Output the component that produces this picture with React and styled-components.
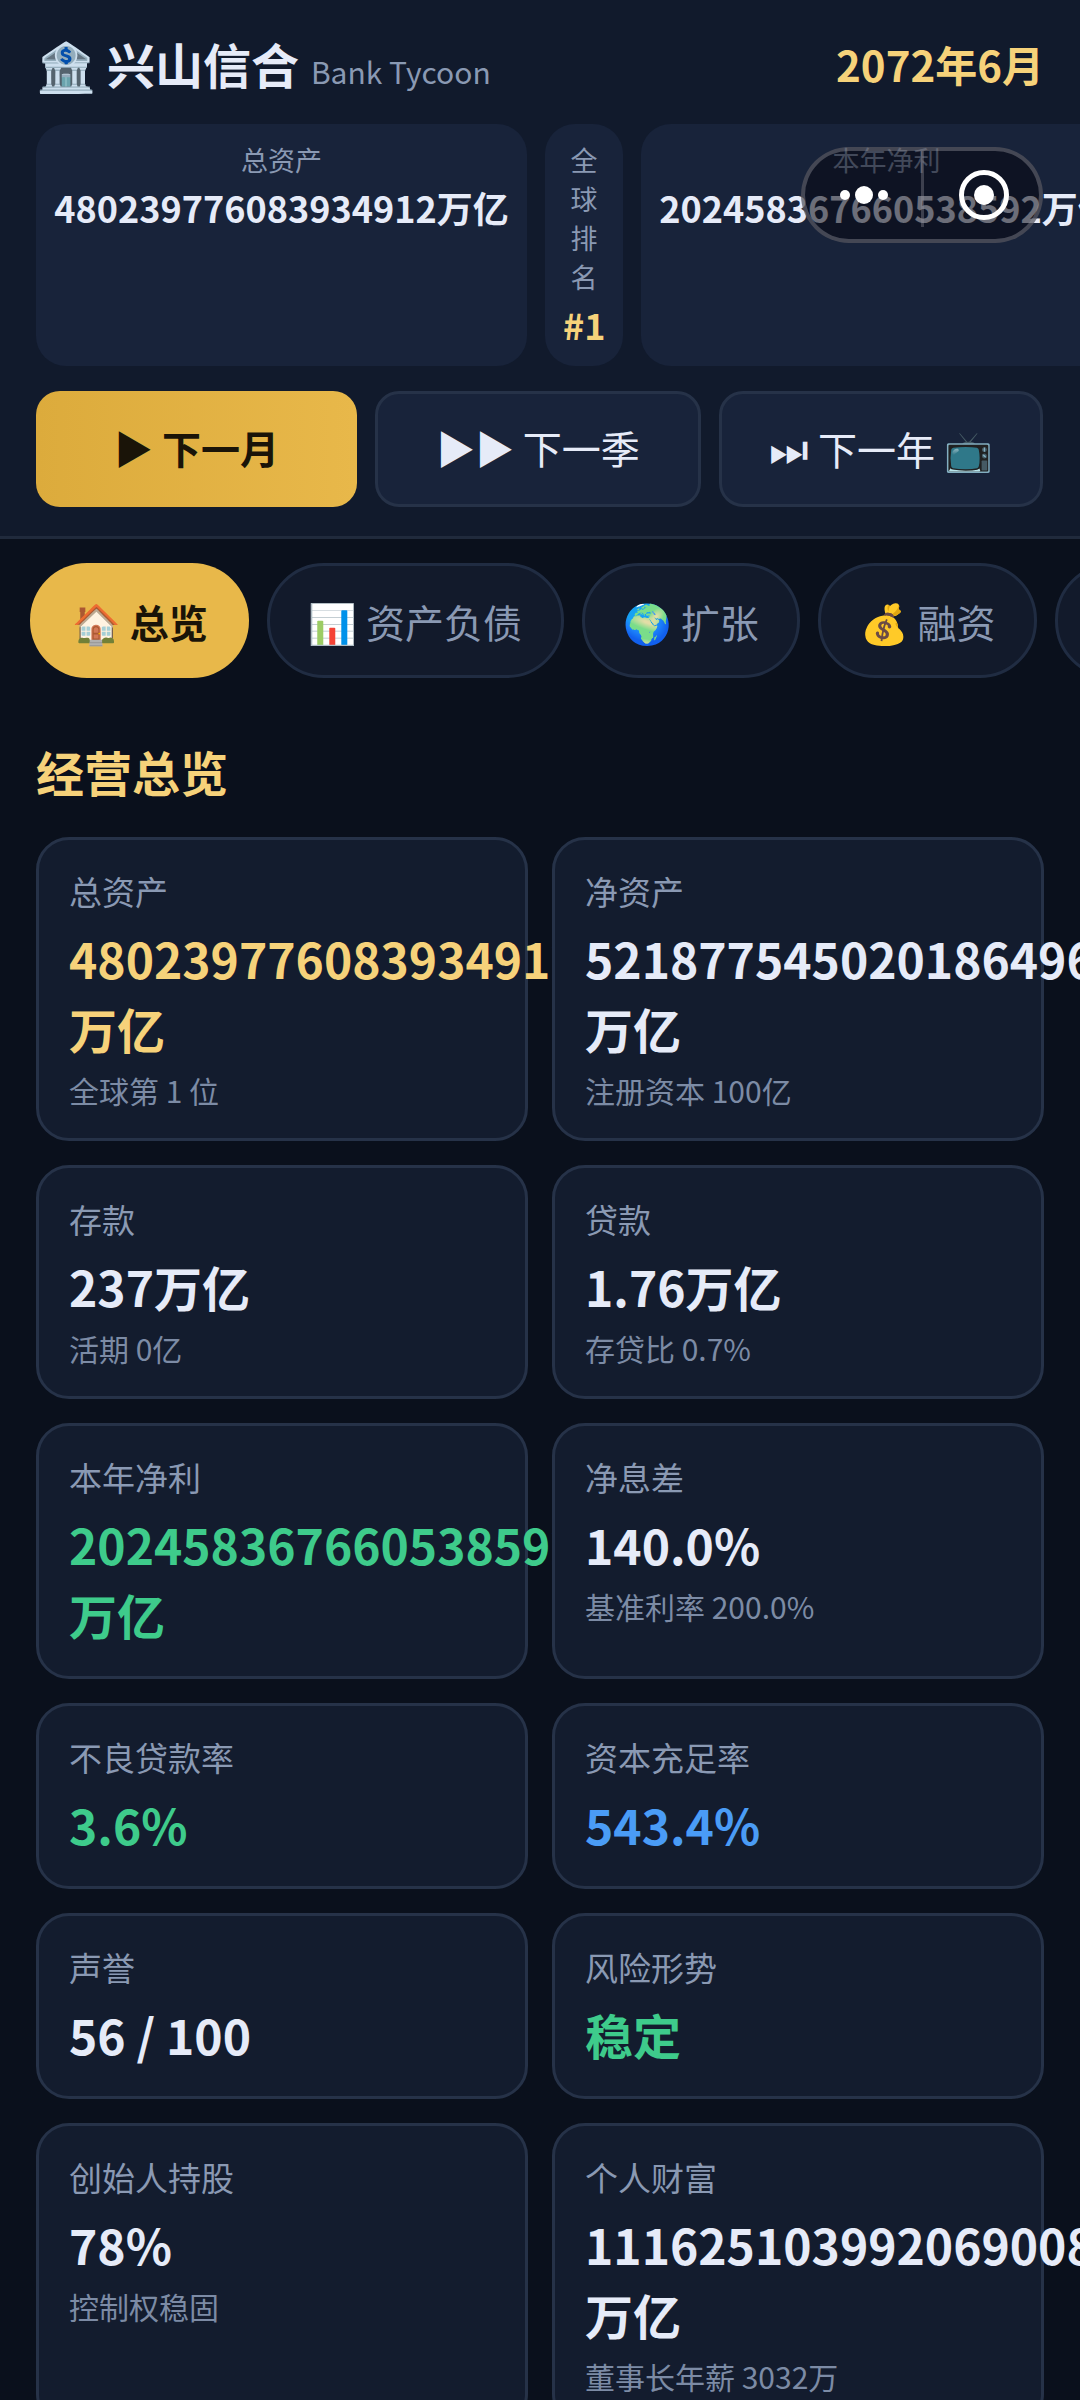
import React from 'react';
import styled, { createGlobalStyle } from 'styled-components';

const GlobalStyle = createGlobalStyle`
  html, body {
    margin: 0;
    padding: 0;
    background: #0a101c;
  }
  body {
    font-family: "Noto Sans CJK SC", "Noto Sans", sans-serif;
    color: #e6ebf8;
  }
  * {
    box-sizing: border-box;
  }
`;

const Page = styled.div`
  position: relative;
  width: 1080px;
  height: 2400px;
  overflow: hidden;
  background: #0a101c;
`;

const Header = styled.header`
  background: #111a2c;
  border-bottom: 3px solid #202a3c;
  padding: 30px 36px 29px;
`;

const TitleRow = styled.div`
  display: flex;
  align-items: center;
  justify-content: space-between;
  height: 66px;
  margin-bottom: 28px;
`;

const Brand = styled.div`
  display: flex;
  align-items: baseline;
  gap: 12px;
`;

const BrandName = styled.span`
  font-size: 48px;
  font-weight: 700;
  line-height: 66px;
`;

const BrandSub = styled.span`
  font-size: 30px;
  font-weight: 400;
  color: #8a99b3;
`;

const DateText = styled.span`
  font-size: 42px;
  font-weight: 700;
  color: #f6d27a;
`;

const StatsRow = styled.div`
  display: flex;
  gap: 18px;
  margin-right: -36px;
  margin-bottom: 25px;
  overflow: hidden;
`;

const StatCell = styled.div`
  flex: 0 0 auto;
  width: ${(props) => props.$width}px;
  padding: 16px 18px 17px;
  background: #18233a;
  border-radius: 30px;
  text-align: center;
`;

const StatLabel = styled.div`
  font-size: 27px;
  line-height: 39px;
  color: #8a99b3;
`;

const StatValue = styled.div`
  margin-top: 3px;
  font-size: 36px;
  line-height: 50px;
  font-weight: 700;
  white-space: nowrap;
  color: ${(props) => props.$color || '#e6ebf8'};
`;

const ButtonRow = styled.div`
  display: flex;
  gap: 18px;
`;

const StepButton = styled.button`
  flex: 0 0 ${(props) => props.$width}px;
  height: 116px;
  padding: 0 0 4px;
  border-radius: 24px;
  border: ${(props) => (props.$primary ? 'none' : '3px solid #263248')};
  background: ${(props) => (props.$primary ? 'linear-gradient(90deg, #dcab3c, #e8b84a)' : '#18233a')};
  color: ${(props) => (props.$primary ? '#1a1408' : '#e6ebf8')};
  font-family: inherit;
  font-size: 39px;
  line-height: 54px;
  font-weight: ${(props) => (props.$primary ? 700 : 400)};
  white-space: nowrap;
`;

const SkipGlyph = styled.span`
  font-size: 44px;
`;

const TabRow = styled.nav`
  display: flex;
  gap: 18px;
  padding: 24px 0 0 30px;
  overflow: hidden;
`;

const Tab = styled.div`
  flex: 0 0 auto;
  display: flex;
  align-items: center;
  height: 115px;
  padding: ${(props) => (props.$active ? '0 41px 0 42px' : '0 38.5px')};
  border-radius: 57px;
  border: ${(props) => (props.$active ? 'none' : '3px solid #202c42')};
  background: ${(props) => (props.$active ? '#e8b84a' : '#121a2b')};
  color: ${(props) => (props.$active ? '#1a1408' : '#8a99b3')};
  font-size: 39px;
  font-weight: ${(props) => (props.$active ? 700 : 400)};
`;

const Main = styled.main`
  padding: 0 36px;
`;

const SectionTitle = styled.h2`
  margin: 59px 0 32px;
  font-size: 48px;
  line-height: 68px;
  font-weight: 700;
  color: #f6d27a;
`;

const CardGrid = styled.div`
  display: grid;
  grid-template-columns: 1fr 1fr;
  gap: 24px;
`;

const Card = styled.div`
  min-width: 0;
  padding: 28px 30px 27px;
  background: #131c2e;
  border: 3px solid #263248;
  border-radius: 33px;
`;

const CardLabel = styled.div`
  font-size: 33px;
  line-height: 46px;
  color: #8a99b3;
`;

const CardValue = styled.div`
  margin-top: 9px;
  font-size: 48px;
  line-height: 70px;
  font-weight: 700;
  color: ${(props) => props.$color || '#e6ebf8'};
`;

const CardSub = styled.div`
  margin-top: 6px;
  font-size: 30px;
  line-height: 42px;
  color: #7c8ba5;
`;

const Capsule = styled.div`
  position: absolute;
  left: 801px;
  top: 147px;
  width: 242px;
  height: 96px;
  display: flex;
  align-items: flex-start;
  border-radius: 48px;
  border: 4px solid rgba(150, 150, 160, 0.4);
  background: rgba(8, 8, 16, 0.55);
`;

const CapsuleHalf = styled.div`
  flex: 1;
  height: 76px;
  padding-top: 12px;
  display: flex;
  justify-content: center;
  align-items: flex-start;
  border-left: ${(props) => (props.$divided ? '3px solid rgba(150, 150, 160, 0.35)' : 'none')};
`;

const gold = '#f6d27a';
const green = '#3ecb8b';
const blue = '#4a9cf6';

const cards = [
  { label: '总资产', value: '480239776083934912万亿', color: gold, sub: '全球第 1 位' },
  { label: '净资产', value: '521877545020186496万亿', sub: '注册资本 100亿' },
  { label: '存款', value: '237万亿', sub: '活期 0亿' },
  { label: '贷款', value: '1.76万亿', sub: '存贷比 0.7%' },
  { label: '本年净利', value: '202458367660538592万亿', color: green },
  { label: '净息差', value: '140.0%', sub: '基准利率 200.0%' },
  { label: '不良贷款率', value: '3.6%', color: green },
  { label: '资本充足率', value: '543.4%', color: blue },
  { label: '声誉', value: '56 / 100' },
  { label: '风险形势', value: '稳定', color: green },
  { label: '创始人持股', value: '78%', sub: '控制权稳固' },
  { label: '个人财富', value: '111625103992069008万亿', sub: '董事长年薪 3032万' },
];

const tabs = ['🏠 总览', '📊 资产负债', '🌍 扩张', '💰 融资', '📈 市场'];

const App = () => (
  <Page>
    <GlobalStyle />
    <Header>
      <TitleRow>
        <Brand>
          <BrandName>🏦 兴山信合</BrandName>
          <BrandSub>Bank Tycoon</BrandSub>
        </Brand>
        <DateText>2072年6月</DateText>
      </TitleRow>
      <StatsRow>
        <StatCell $width={491}>
          <StatLabel>总资产</StatLabel>
          <StatValue>480239776083934912万亿</StatValue>
        </StatCell>
        <StatCell $width={78}>
          <StatLabel>全球排名</StatLabel>
          <StatValue $color={gold}>#1</StatValue>
        </StatCell>
        <StatCell $width={491}>
          <StatLabel>本年净利</StatLabel>
          <StatValue>202458367660538592万亿</StatValue>
        </StatCell>
      </StatsRow>
      <ButtonRow>
        <StepButton $primary $width={321}>▶ 下一月</StepButton>
        <StepButton $width={326}>▶▶ 下一季</StepButton>
        <StepButton $width={324}><SkipGlyph>⏭</SkipGlyph> 下一年 📺</StepButton>
      </ButtonRow>
    </Header>
    <TabRow>
      {tabs.map((tab, index) => (
        <Tab key={tab} $active={index === 0}>{tab}</Tab>
      ))}
    </TabRow>
    <Main>
      <SectionTitle>经营总览</SectionTitle>
      <CardGrid>
        {cards.map((card) => (
          <Card key={card.label}>
            <CardLabel>{card.label}</CardLabel>
            <CardValue $color={card.color}>{card.value}</CardValue>
            {card.sub && <CardSub>{card.sub}</CardSub>}
          </Card>
        ))}
      </CardGrid>
    </Main>
    <Capsule>
      <CapsuleHalf>
        <svg width="64" height="24" viewBox="0 0 64 24" style={{ marginTop: 20 }}>
          <circle cx="14" cy="12" r="5" fill="#fff" />
          <circle cx="33" cy="12" r="9" fill="#fff" />
          <circle cx="52" cy="12" r="5" fill="#fff" />
        </svg>
      </CapsuleHalf>
      <CapsuleHalf $divided>
        <svg width="50" height="50" viewBox="0 0 50 50" style={{ marginLeft: 6, marginTop: 7 }}>
          <circle cx="25" cy="25" r="22.5" fill="none" stroke="#fff" strokeWidth="5" />
          <circle cx="25" cy="25" r="10" fill="#fff" />
        </svg>
      </CapsuleHalf>
    </Capsule>
  </Page>
);

export default App;
